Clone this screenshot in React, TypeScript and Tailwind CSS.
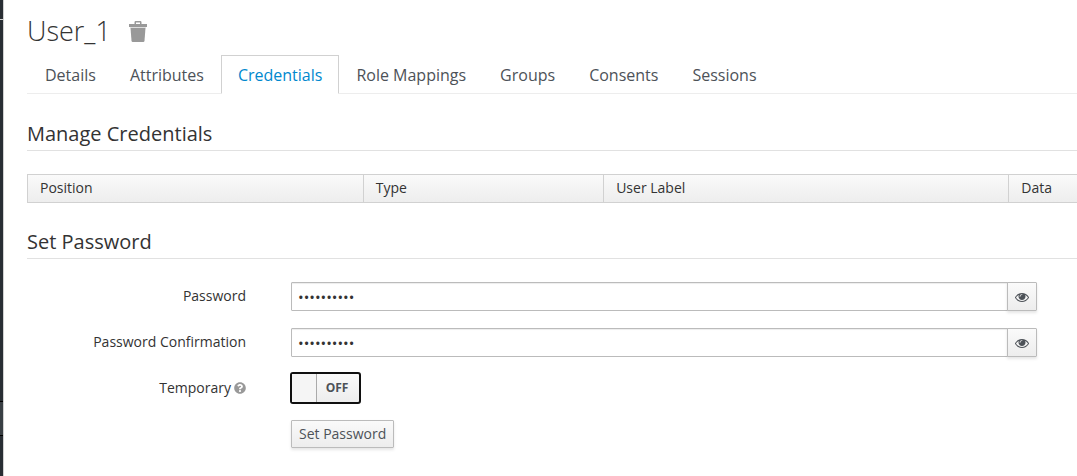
import { useState } from "react";
import { FaQuestionCircle } from "react-icons/fa";

const tabs = ["Details", "Attributes", "Credentials", "Role Mappings", "Groups", "Consents", "Sessions"];

function TrashIcon() {
  return (
    <svg viewBox="0 0 18 21" className="h-[21px] w-[18px] fill-[#999999]" aria-hidden="true">
      <path fillRule="evenodd" d="M0 3h5.500V1.200Q5.500 0 6.700 0h4.600Q12.500 0 12.500 1.200V3H18v3H0zM7 1.500V3h4V1.500z" />
      <path d="M1.500 7h15L15.500 19.800Q15.400 21 14.300 21H3.700Q2.600 21 2.500 19.800z" />
      <path d="M1.200 6h15.600v1H1.200z" className="fill-[#dddddd]" />
    </svg>
  );
}

function EyeIcon() {
  return (
    <svg viewBox="0 0 1792 1792" className="size-[14px] fill-[#4d5258]" aria-hidden="true">
      <path d="M1664 960q-152-236-381-353 61 104 61 225 0 185-131.500 316.500t-316.500 131.500-316.500-131.500-131.500-316.500q0-121 61-225-229 117-381 353 133 205 333.500 326.500t434.500 121.500 434.500-121.500 333.500-326.500zm-720-384q0-20-14-34t-34-14q-125 0-214.500 89.500t-89.500 214.500q0 20 14 34t34 14 34-14 14-34q0-86 61-147t147-61q20 0 34-14t14-34zm848 384q0 34-20 69-140 230-376.500 368.500t-499.500 138.500-499.500-139-376.500-368q-20-35-20-69t20-69q140-229 376.500-368t499.500-139 499.500 139 376.500 368q20 35 20 69z" />
    </svg>
  );
}

function SectionTitle({ children }: { children: string }) {
  return <h2 className="border-b border-[#e1e1e1] pb-1 text-xl leading-6">{children}</h2>;
}

function PasswordRow({ id, label }: { id: string; label: string }) {
  const [shown, setShown] = useState(false);
  return (
    <div className="flex items-center">
      <label htmlFor={id} className="w-[219px] shrink-0 pb-0.5 text-right font-medium">{label}</label>
      <div className="ml-[45px] flex flex-1">
        <input
          id={id}
          type={shown ? "text" : "password"}
          defaultValue="changeme12"
          className="h-[29px] min-w-0 flex-1 rounded-l-[1px] border border-[#bbbbbb] bg-white px-1.5 text-[15px] text-[#333333] shadow-[inset_0_1px_1px_rgba(3,3,3,0.075)] outline-none"
        />
        <button
          type="button"
          aria-label={`Show ${label}`}
          onClick={() => setShown(!shown)}
          className="-ml-px flex h-[29px] w-[30px] items-center justify-center rounded-r-[1px] border border-[#bbbbbb] bg-linear-to-b from-[#fafafa] to-[#ededed] shadow-[0_2px_3px_rgba(3,3,3,0.1)]"
        >
          <EyeIcon />
        </button>
      </div>
    </div>
  );
}

export default function App() {
  const [temporary, setTemporary] = useState(false);
  return (
    <div className="flex min-h-screen overflow-hidden bg-white font-['Open_Sans',sans-serif] text-sm text-[#333333]">
      <aside className="flex w-1 shrink-0 flex-col border-r border-[#d1d1d1] bg-[#292e34]">
        <div className="mt-[19px] h-px bg-[#d1d1d1]" />
        <div className="mt-[381px] h-[35px] border-y border-black bg-[#393f44]" />
      </aside>
      <main className="min-w-0 flex-1 pl-[23px]">
        <header className="flex h-[55px] items-center gap-[18px] pt-2">
          <h1 className="pb-0.5 text-[27px] leading-8 font-light">User_1</h1>
          <button type="button" aria-label="Delete user"><TrashIcon /></button>
        </header>
        <nav className="flex h-[39px] border-b border-[#ededed] pl-px text-base">
          {tabs.map((tab) => (
            <a
              key={tab}
              href="#"
              className={
                tab === "Credentials"
                  ? "-mb-px border border-b-white border-[#d1d1d1] bg-white px-4 pt-[7px] text-[#0088ce]"
                  : "border border-transparent px-4 pt-[7px] text-[#4d5258]"
              }
            >
              {tab}
            </a>
          ))}
        </nav>
        <section className="pt-7">
          <SectionTitle>Manage Credentials</SectionTitle>
          <table className="mt-[23px] w-full table-fixed border-collapse border border-r-0 border-[#d1d1d1] text-left">
            <thead>
              <tr className="h-7 bg-linear-to-b from-[#fafafa] to-[#ededed] shadow-[inset_0_-1px_0_#ffffff]">
                <th className="w-[32%] border border-[#d1d1d1] px-3 pb-0.5 font-medium">Position</th>
                <th className="w-[22.9%] border border-[#d1d1d1] px-3 pb-0.5 font-medium">Type</th>
                <th className="w-[38.6%] border border-[#d1d1d1] px-3 pb-0.5 font-medium">User Label</th>
                <th className="border-y border-[#d1d1d1] px-3 pb-0.5 font-medium">Data</th>
              </tr>
            </thead>
          </table>
        </section>
        <section className="pt-[27px]">
          <SectionTitle>Set Password</SectionTitle>
          <form className="mt-[23px] flex flex-col gap-[17px] pr-10" onSubmit={(e) => e.preventDefault()}>
            <PasswordRow id="password" label="Password" />
            <PasswordRow id="confirmation" label="Password Confirmation" />
            <div className="flex items-center">
              <label htmlFor="temporary" className="flex w-[219px] items-center justify-end gap-[3px] pb-0.5 font-medium">
                Temporary
                <FaQuestionCircle className="size-3 text-[#999999]" />
              </label>
              <button
                id="temporary"
                type="button"
                role="switch"
                aria-checked={temporary}
                onClick={() => setTemporary(!temporary)}
                className="-mt-0.5 -mb-px ml-[44px] flex h-8 w-[71px] rounded-[3px] border-2 border-[#101010] bg-linear-to-b from-[#fafafa] to-[#ededed] text-xs font-bold text-[#4d5258]"
              >
                <span className="h-full w-[25px] border-r border-[#aaaaaa] bg-[#f5f5f5]" />
                <span className="flex h-full flex-1 items-center justify-center pr-0.5">{temporary ? "ON" : "OFF"}</span>
              </button>
            </div>
            <div className="ml-[264px] flex">
              <button type="submit" className="h-7 rounded-[1px] border border-[#bbbbbb] bg-linear-to-b from-[#fafafa] to-[#ededed] px-[7px] font-medium text-[#4d5258] shadow-[0_2px_3px_rgba(3,3,3,0.1)]">
                Set Password
              </button>
            </div>
          </form>
        </section>
      </main>
    </div>
  );
}
